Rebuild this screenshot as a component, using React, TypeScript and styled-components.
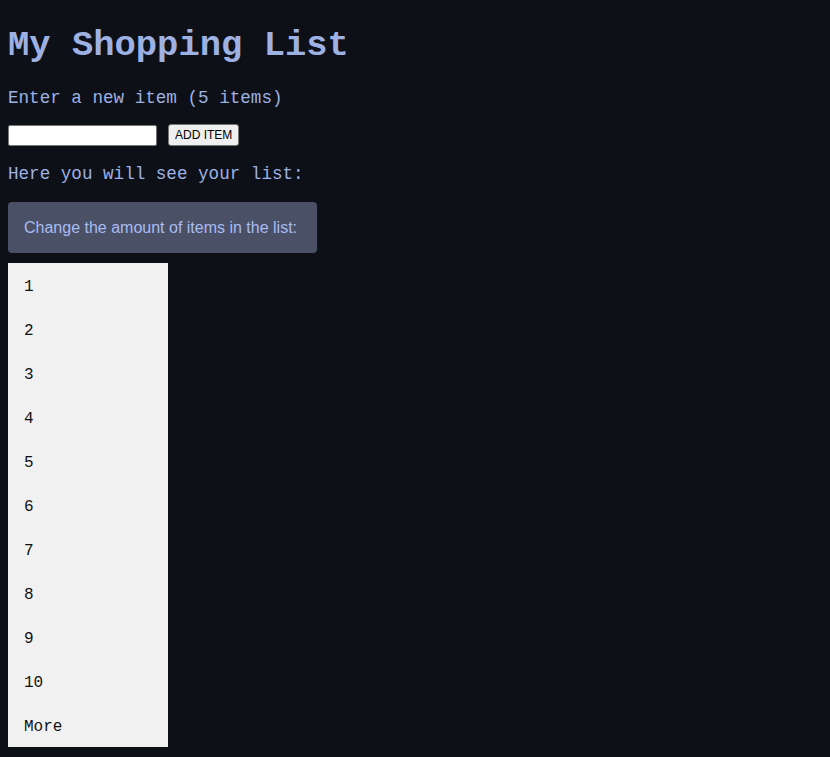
import React, { useState } from "react";
import styled, { createGlobalStyle } from "styled-components";

const Global = createGlobalStyle`
  html, body { background: #0d1017; }
  body { margin: 8px; font-family: "Liberation Mono", "Courier New", monospace; color: #9eb1e3; }
`;

const Title = styled.h1`
  font-family: "Liberation Mono", "Courier New", monospace;
  font-size: 35.5px;
  font-weight: bold;
  color: #9eb1e3;
  margin: 18px 0 22px;
  line-height: 40px;
`;

const Label = styled.p<{ $gap: number }>`
  font-size: 17.6px;
  margin: 0 0 ${(p) => p.$gap}px;
  line-height: 20px;
`;

const Form = styled.div`
  display: flex;
  align-items: center;
  gap: 11px;
  margin-bottom: 18px;
`;

const Input = styled.input`
  width: 149px;
  height: 21px;
  box-sizing: border-box;
  border: 1px solid #767676;
  border-radius: 2px;
  background: #fff;
  padding: 1px 2px;
`;

const Button = styled.button`
  font-family: "Liberation Sans", Arial, sans-serif;
  font-size: 12px;
  height: 22px;
  padding: 1px 6px;
  border: 1px solid #767676;
  border-radius: 3px;
  background: #efefef;
  color: #000;
`;

const Notice = styled.div`
  width: fit-content;
  background: #4a5066;
  color: #a8bcf2;
  font-family: "Liberation Sans", Tahoma, sans-serif;
  font-size: 16px;
  border-radius: 4px;
  padding: 16px 20px 15px 16px;
  line-height: 20px;
`;

const List = styled.ul`
  list-style: none;
  margin: 10px 0 0;
  padding: 0;
  width: 160px;
  background: #f1f1f1;
`;

const Item = styled.li`
  box-sizing: border-box;
  height: 44px;
  line-height: 44px;
  padding: 2px 0 0 16px;
  font-family: "Liberation Mono", "Courier New", monospace;
  font-size: 16px;
  color: #111;
`;

export default function App() {
  const [value, setValue] = useState("");
  const items = ["1", "2", "3", "4", "5", "6", "7", "8", "9", "10", "More"];
  return (
    <>
      <Global />
      <Title>My Shopping List</Title>
      <Label $gap={16}>Enter a new item (5 items)</Label>
      <Form>
        <Input value={value} onChange={(e) => setValue(e.target.value)} />
        <Button>ADD ITEM</Button>
      </Form>
      <Label $gap={18}>Here you will see your list:</Label>
      <Notice>Change the amount of items in the list:</Notice>
      <List>
        {items.map((i) => (
          <Item key={i}>{i}</Item>
        ))}
      </List>
    </>
  );
}
